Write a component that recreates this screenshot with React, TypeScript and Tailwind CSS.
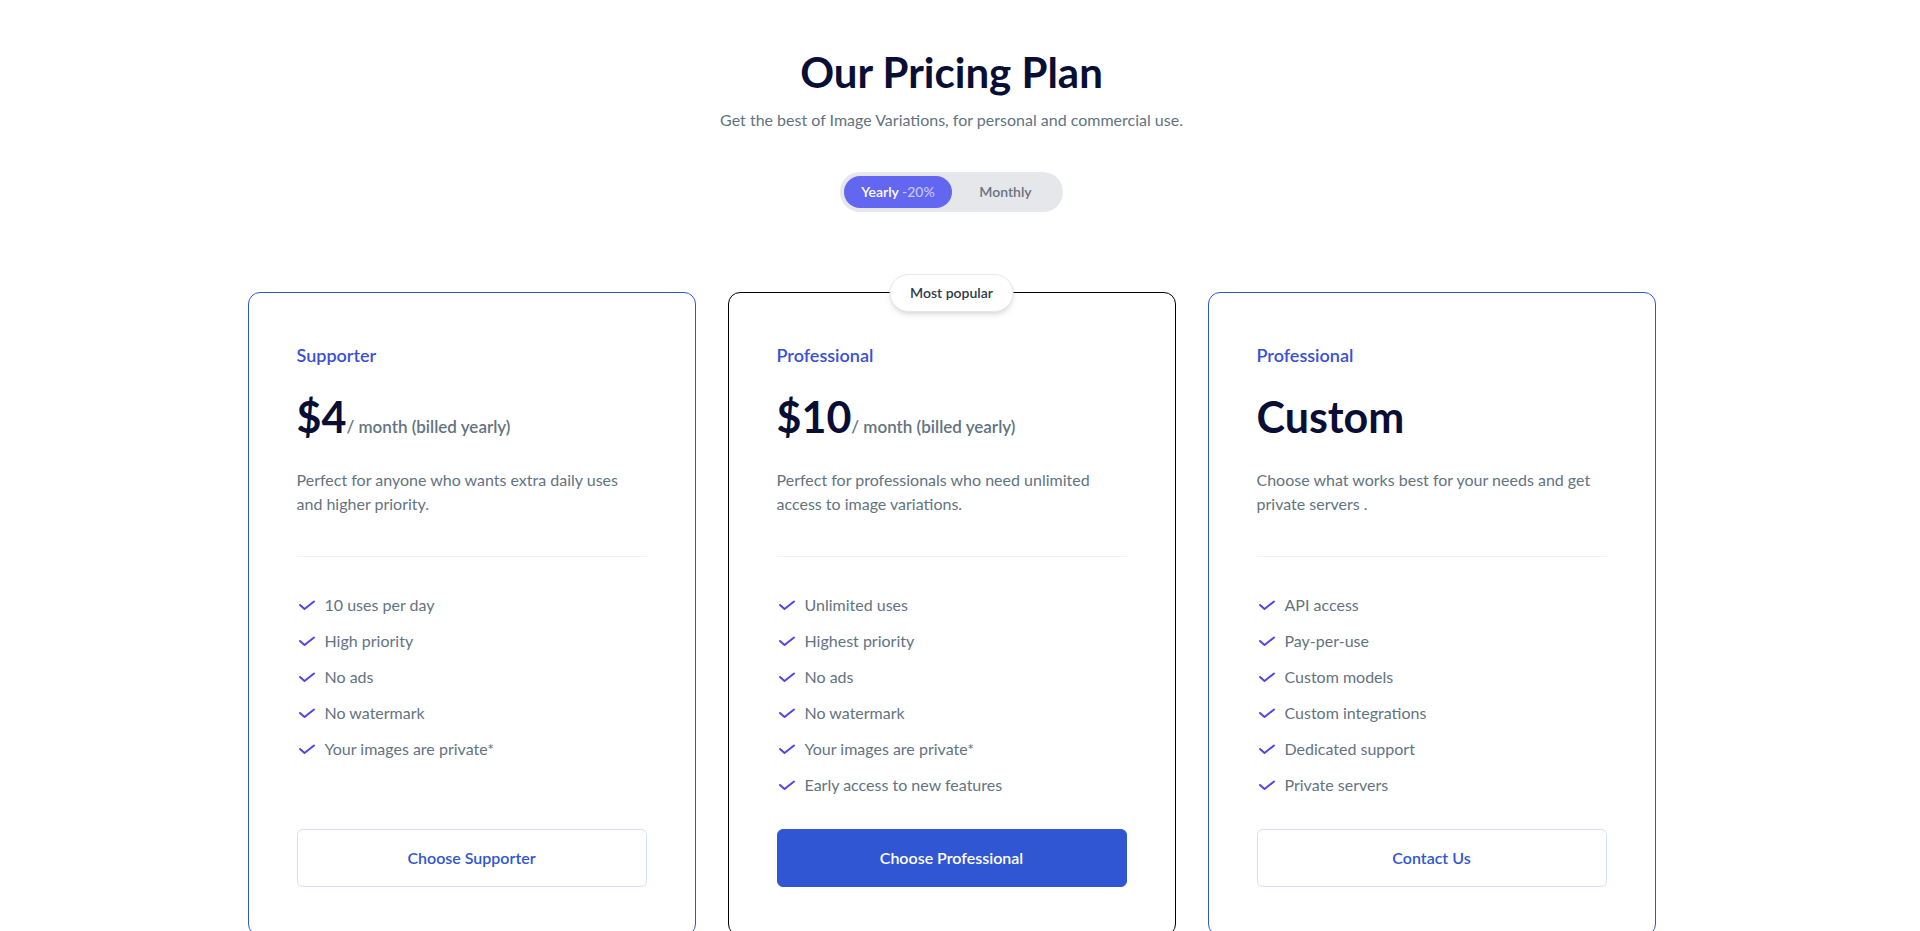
import { useState } from "react";

type Plan = {
  label: string;
  price: string;
  period?: string;
  description: string;
  features: string[];
  cta: string;
  popular?: boolean;
};

const plans: Plan[] = [
  {
    label: "Supporter",
    price: "$4",
    period: "/ month (billed yearly)",
    description: "Perfect for anyone who wants extra daily uses and higher priority.",
    features: ["10 uses per day", "High priority", "No ads", "No watermark", "Your images are private*"],
    cta: "Choose Supporter",
  },
  {
    label: "Professional",
    price: "$10",
    period: "/ month (billed yearly)",
    description: "Perfect for professionals who need unlimited access to image variations.",
    features: [
      "Unlimited uses",
      "Highest priority",
      "No ads",
      "No watermark",
      "Your images are private*",
      "Early access to new features",
    ],
    cta: "Choose Professional",
    popular: true,
  },
  {
    label: "Professional",
    price: "Custom",
    description: "Choose what works best for your needs and get private servers .",
    features: [
      "API access",
      "Pay-per-use",
      "Custom models",
      "Custom integrations",
      "Dedicated support",
      "Private servers",
    ],
    cta: "Contact Us",
  },
];

function CheckIcon() {
  return (
    <svg width="18" height="16" viewBox="0 0 18 16" fill="none" className="flex-shrink-0">
      <polyline
        points="3,8 7.5,12 17,4.5"
        stroke="#4f46e5"
        strokeWidth="2"
        strokeLinecap="round"
        strokeLinejoin="round"
      />
    </svg>
  );
}

function PlanCard({ plan }: { plan: Plan }) {
  return (
    <div
      className={`relative flex flex-col rounded-xl border bg-white p-12 ${
        plan.popular ? "border-black" : "border-[#3056d3]"
      }`}
    >
      {plan.popular && (
        <span className="absolute -top-[19px] left-1/2 -translate-x-1/2 rounded-full border border-gray-200 bg-white px-5 py-2 text-sm leading-5 font-semibold text-[#2e3a4d] shadow-md">
          Most popular
        </span>
      )}
      <span className="mb-4 block text-lg leading-7 font-semibold text-[#3b4fd6]">{plan.label}</span>
      <h2 className="text-[43px] leading-[63px] font-bold text-[#090e34]">
        {plan.price}
        {plan.period && (
          <span className="text-[17px] leading-none font-semibold text-[#637381]">{plan.period}</span>
        )}
      </h2>
      <p className="mt-5 mb-8 border-b border-[#f2f2f2] pb-10 text-base leading-6 text-[#637381]">
        {plan.description}
      </p>
      <ul className="flex-1">
        {plan.features.map((f) => (
          <li key={f} className="mb-1 flex items-center gap-2.5 text-base leading-8 text-[#637381]">
            <CheckIcon />
            {f}
          </li>
        ))}
      </ul>
      <button
        className={`mt-6 block w-full rounded-md border py-4 text-center text-base leading-6 font-semibold ${
          plan.popular
            ? "border-[#3056d3] bg-[#3056d3] text-white"
            : "border-[#d4deff] bg-transparent text-[#3056d3]"
        }`}
      >
        {plan.cta}
      </button>
    </div>
  );
}

export default function App() {
  const [billing, setBilling] = useState<"yearly" | "monthly">("yearly");

  return (
    <div className="min-h-screen bg-white pr-[17px] pb-20 font-['Lato',sans-serif]">
      <div className="pt-12 text-center">
        <h1 className="text-[42px] leading-[48px] font-bold text-[#090e34]">Our Pricing Plan</h1>
        <p className="mt-3 text-base leading-6 text-[#637381]">
          Get the best of Image Variations, for personal and commercial use.
        </p>
        <div className="mt-10 inline-flex rounded-full bg-[#e5e7eb] p-1">
          <button
            onClick={() => setBilling("yearly")}
            className={`h-8 w-[108px] rounded-full text-sm font-semibold ${
              billing === "yearly" ? "bg-[#6366f1] text-white" : "text-[#6b7280]"
            }`}
          >
            Yearly <span className="font-medium text-[#c7caff]">-20%</span>
          </button>
          <button
            onClick={() => setBilling("monthly")}
            className={`h-8 w-[107px] rounded-full text-sm font-semibold ${
              billing === "monthly" ? "bg-[#6366f1] text-white" : "text-[#6b7280]"
            }`}
          >
            Monthly
          </button>
        </div>
      </div>

      <div className="mx-auto mt-20 grid max-w-[1408px] grid-cols-3 gap-8">
        {plans.map((p, i) => (
          <PlanCard key={i} plan={p} />
        ))}
      </div>
    </div>
  );
}
